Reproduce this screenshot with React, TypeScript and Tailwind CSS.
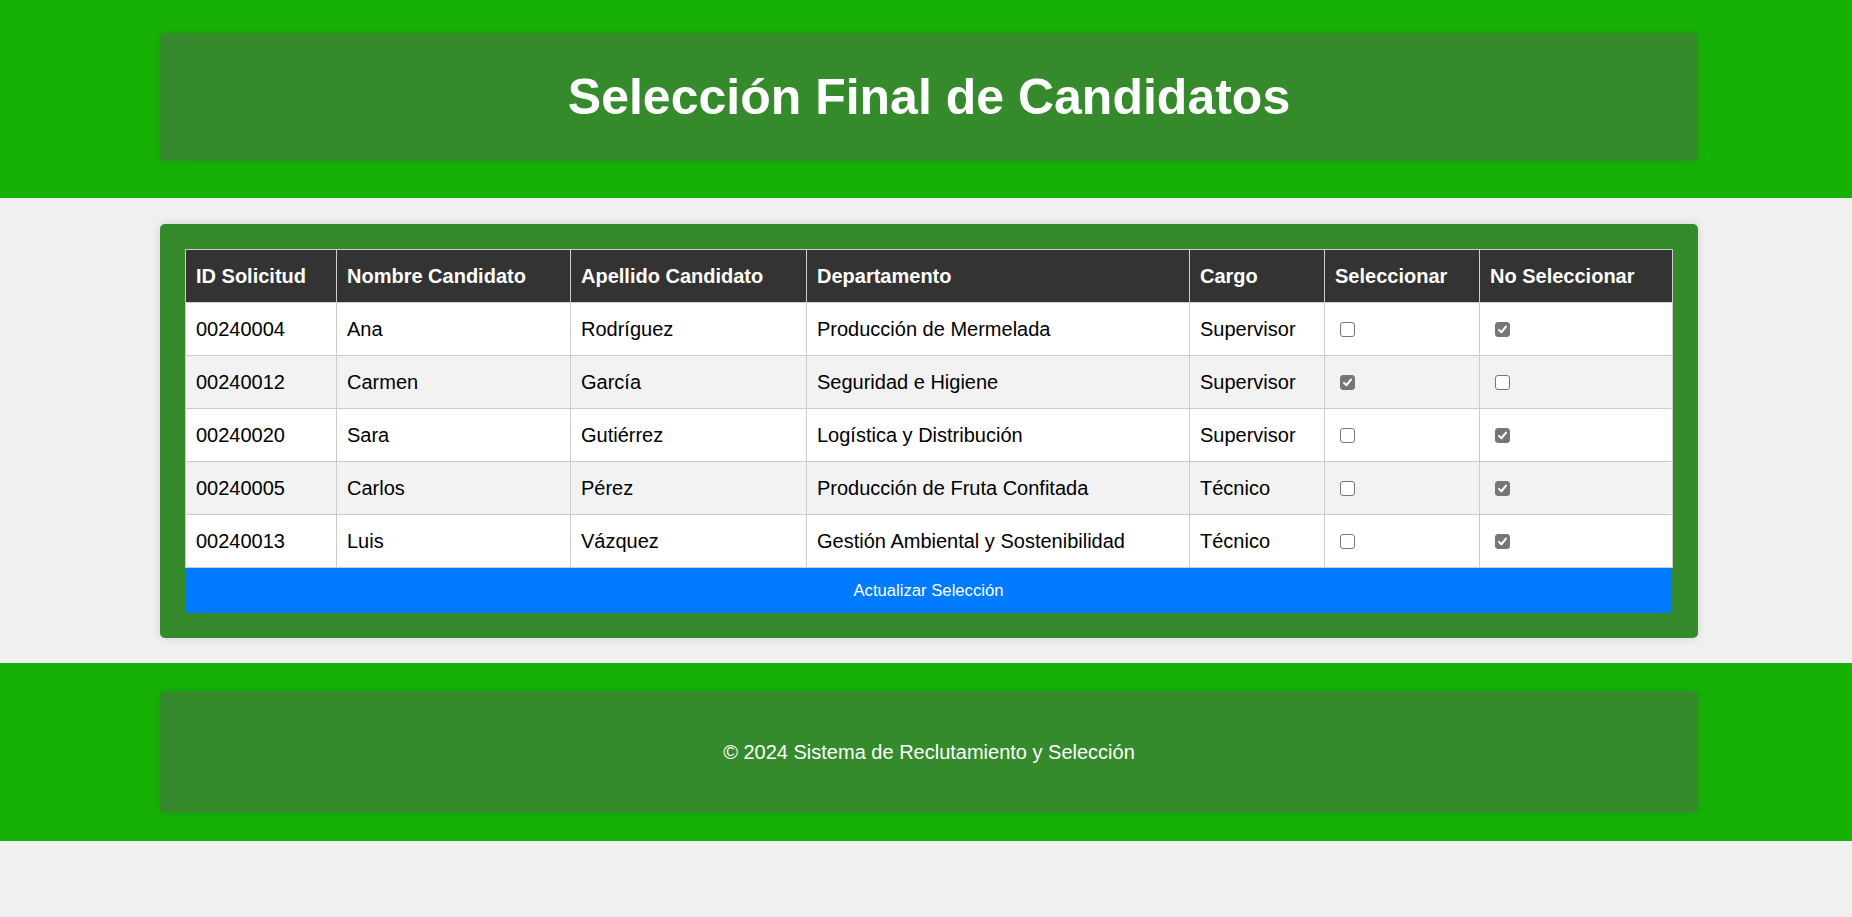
import React, { useState } from 'react';

type Candidato = {
  id: string;
  nombre: string;
  apellido: string;
  departamento: string;
  cargo: string;
  seleccionado: boolean;
};

const candidatosIniciales: Candidato[] = [
  { id: '00240004', nombre: 'Ana', apellido: 'Rodríguez', departamento: 'Producción de Mermelada', cargo: 'Supervisor', seleccionado: false },
  { id: '00240012', nombre: 'Carmen', apellido: 'García', departamento: 'Seguridad e Higiene', cargo: 'Supervisor', seleccionado: true },
  { id: '00240020', nombre: 'Sara', apellido: 'Gutiérrez', departamento: 'Logística y Distribución', cargo: 'Supervisor', seleccionado: false },
  { id: '00240005', nombre: 'Carlos', apellido: 'Pérez', departamento: 'Producción de Fruta Confitada', cargo: 'Técnico', seleccionado: false },
  { id: '00240013', nombre: 'Luis', apellido: 'Vázquez', departamento: 'Gestión Ambiental y Sostenibilidad', cargo: 'Técnico', seleccionado: false },
];

const Casilla: React.FC<{ checked: boolean; onClick: () => void }> = ({ checked, onClick }) => (
  <button
    type="button"
    onClick={onClick}
    className={
      'ml-[5px] flex h-[15px] w-[15px] items-center justify-center rounded-[3px] border ' +
      (checked ? 'border-[#767676] bg-[#767676]' : 'border-[#767676] bg-white')
    }
  >
    {checked && (
      <svg width="11" height="11" viewBox="0 0 12 12" fill="none">
        <path d="M2.2 6.4 4.8 9 9.8 2.8" stroke="white" strokeWidth="2.2" strokeLinecap="round" strokeLinejoin="round" />
      </svg>
    )}
  </button>
);

const App: React.FC = () => {
  const [candidatos, setCandidatos] = useState<Candidato[]>(candidatosIniciales);

  const marcar = (id: string, valor: boolean) => {
    setCandidatos(prev => prev.map(c => (c.id === id ? { ...c, seleccionado: valor } : c)));
  };

  const th = 'border border-[#cccccc] px-[10px] py-[15px] text-left font-bold leading-[22px] text-white';
  const td = 'border border-[#cccccc] px-[10px] py-[15px] leading-[22px] text-black';

  return (
    <div className="min-h-[917px] bg-[#f0f0f0] font-['Liberation_Sans',Arial,sans-serif]">
      {/* encabezado */}
      <header className="bg-[#17b106] pt-[33px] pb-[37px]">
        <div className="ml-[160px] flex h-[128px] w-[1538px] items-center justify-center rounded-[5px] bg-[#358a2c] shadow-[0_0_8px_rgba(0,0,0,0.1)]">
          <h1 className="text-[50px] font-bold leading-[58px] text-white">Selección Final de Candidatos</h1>
        </div>
      </header>

      {/* tabla */}
      <main className="pt-[26px] pb-[25px]">
        <div className="ml-[160px] w-[1538px] rounded-[5px] bg-[#358a2c] p-[25px] shadow-[0_0_10px_rgba(0,0,0,0.12)]">
          <table className="w-[1487px] table-fixed border-collapse text-[20px]">
            <colgroup>
              <col className="w-[151px]" />
              <col className="w-[234px]" />
              <col className="w-[236px]" />
              <col className="w-[383px]" />
              <col className="w-[135px]" />
              <col className="w-[155px]" />
              <col className="w-[193px]" />
            </colgroup>
            <thead>
              <tr className="bg-[#333333]">
                <th className={th}>ID Solicitud</th>
                <th className={th}>Nombre Candidato</th>
                <th className={th}>Apellido Candidato</th>
                <th className={th}>Departamento</th>
                <th className={th}>Cargo</th>
                <th className={th}>Seleccionar</th>
                <th className={th}>No Seleccionar</th>
              </tr>
            </thead>
            <tbody>
              {candidatos.map((c, i) => (
                <tr key={c.id} className={i % 2 === 1 ? 'bg-[#f2f2f2]' : 'bg-white'}>
                  <td className={td}>{c.id}</td>
                  <td className={td}>{c.nombre}</td>
                  <td className={td}>{c.apellido}</td>
                  <td className={td}>{c.departamento}</td>
                  <td className={td}>{c.cargo}</td>
                  <td className={td}>
                    <Casilla checked={c.seleccionado} onClick={() => marcar(c.id, true)} />
                  </td>
                  <td className={td}>
                    <Casilla checked={!c.seleccionado} onClick={() => marcar(c.id, false)} />
                  </td>
                </tr>
              ))}
            </tbody>
          </table>
          <button
            type="button"
            className="flex h-[45px] w-[1487px] items-center justify-center rounded-b-[4px] bg-[#007bff] text-[16.67px] text-white"
          >
            Actualizar Selección
          </button>
        </div>
      </main>

      {/* pie */}
      <footer className="bg-[#17b106] pt-[28px] pb-[28px]">
        <div className="ml-[160px] flex h-[122px] w-[1538px] items-center justify-center rounded-[5px] bg-[#358a2c] shadow-[0_0_8px_rgba(0,0,0,0.1)]">
          <p className="text-[20px] leading-[23px] text-white">© 2024 Sistema de Reclutamiento y Selección</p>
        </div>
      </footer>
    </div>
  );
};

export default App;
